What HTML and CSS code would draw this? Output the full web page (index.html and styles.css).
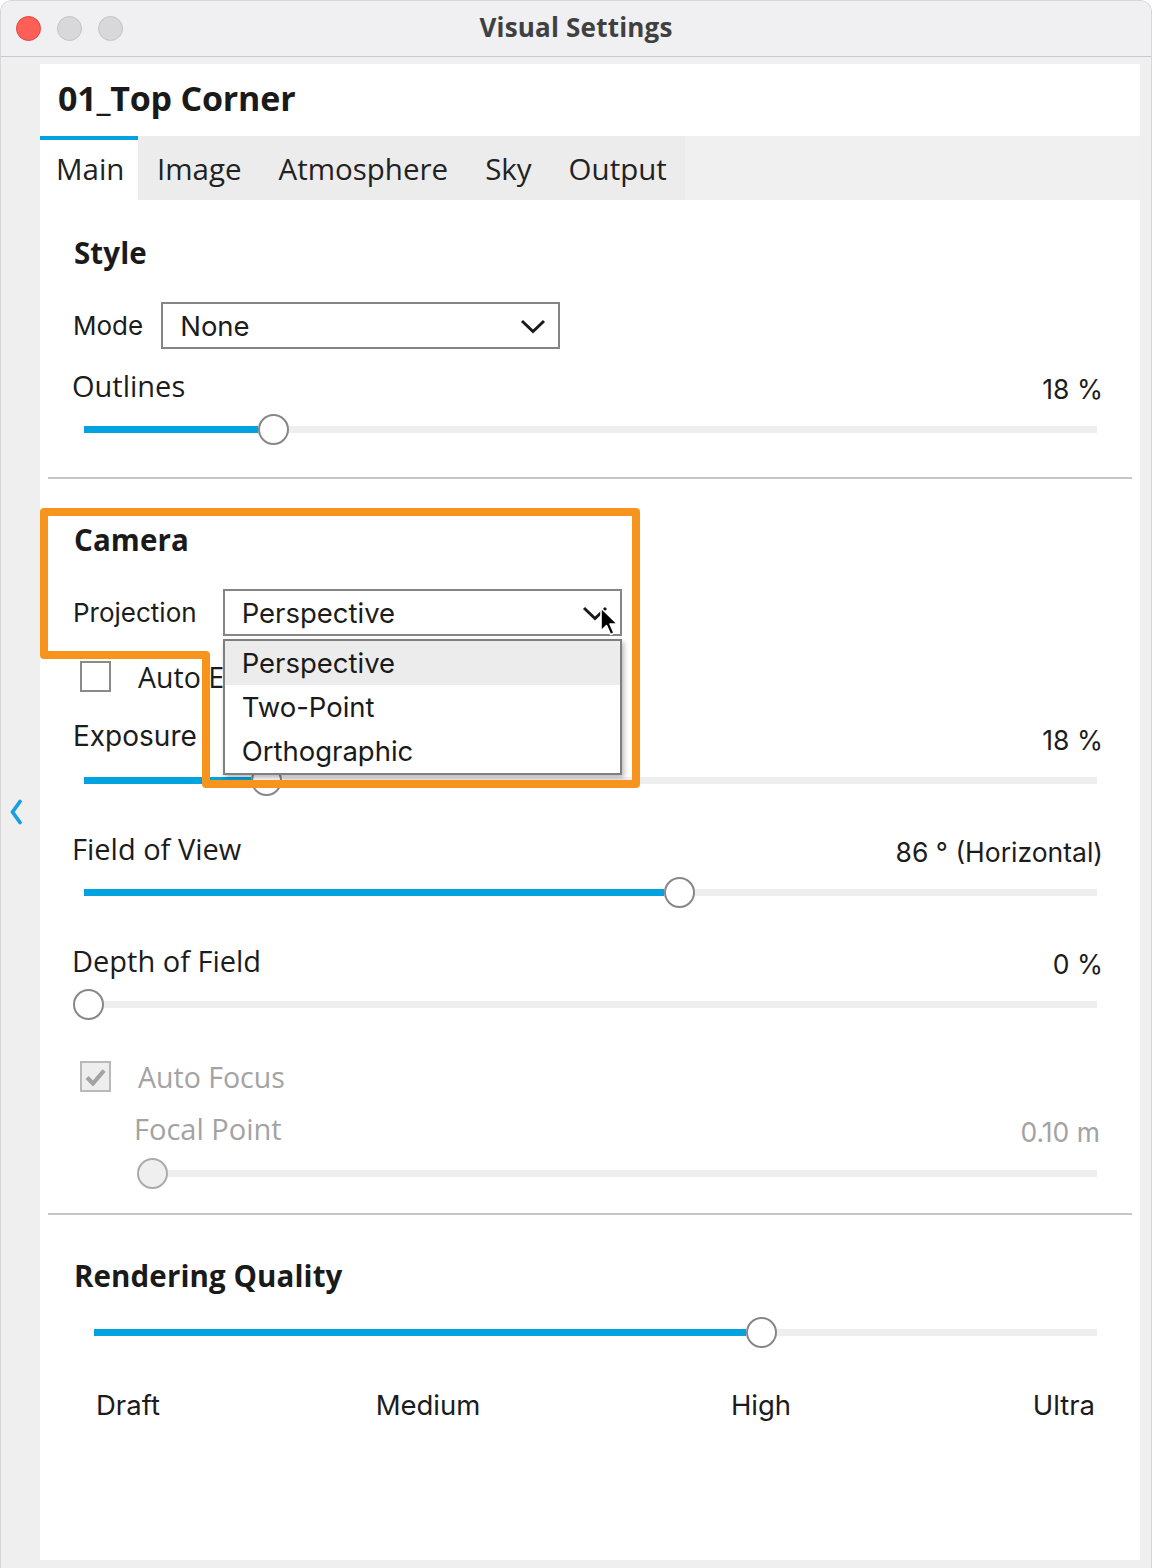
FILE: index.html
```html
<!DOCTYPE html>
<html>
<head>
<meta charset="utf-8">
<title>Visual Settings</title>
<link rel="stylesheet" href="styles.css">
</head>
<body>
<div class="window">
  <div class="titlebar">
    <div class="lights">
      <span class="light red"></span>
      <span class="light"></span>
      <span class="light"></span>
    </div>
    <div class="title">Visual Settings</div>
    <div></div>
  </div>
  <div class="body">
    <div class="gutter-left">
      <svg class="back" width="14" height="26" viewBox="0 0 14 26"><path d="M11 2.5 L3.5 13 L11 23.5" fill="none" stroke="#1a9fe0" stroke-width="3.8" stroke-linecap="round" stroke-linejoin="round"/></svg>
    </div>
    <div class="panel">
      <div class="doc-title">01_Top Corner</div>
      <div class="tabs">
        <div class="tab-group">
          <div class="tab active">Main</div>
          <div class="tab">Image</div>
          <div class="tab">Atmosphere</div>
          <div class="tab">Sky</div>
          <div class="tab">Output</div>
        </div>
      </div>
      <div class="content">
        <section class="section first">
          <h2 class="heading">Style</h2>
          <div class="field-row">
            <span class="field-label">Mode</span>
            <div class="select">
              <span>None</span>
              <svg class="chev" width="26" height="15" viewBox="0 0 26 15"><path d="M2 2 L13 12.5 L24 2" fill="none" stroke="#1a1a1a" stroke-width="3" stroke-linejoin="miter"/></svg>
            </div>
          </div>
          <div class="slider-block tight">
            <div class="slider-head"><span class="lbl">Outlines</span><span class="val">18 %</span></div>
            <div class="slider"><div class="track"><div class="fill" style="width:174px"></div><div class="thumb" style="left:174px"></div></div></div>
          </div>
        </section>
        <div class="divider"></div>
        <section class="section camera">
          <h2 class="heading">Camera</h2>
          <div class="field-row projection">
            <span class="field-label">Projection</span>
            <div class="select">
              <span>Perspective</span>
              <svg class="chev" width="26" height="15" viewBox="0 0 26 15"><path d="M2 2 L13 12.5 L24 2" fill="none" stroke="#1a1a1a" stroke-width="3" stroke-linejoin="miter"/></svg>
              <div class="dropdown">
                <div class="option hover">Perspective</div>
                <div class="option">Two-Point</div>
                <div class="option">Orthographic</div>
              </div>
            </div>
          </div>
          <div class="check-row">
            <span class="checkbox"></span>
            <span class="check-label">Auto Exposure</span>
          </div>
          <div class="slider-block after-check">
            <div class="slider-head"><span class="lbl inter">Exposure</span><span class="val">18 %</span></div>
            <div class="slider"><div class="track"><div class="fill" style="width:167px"></div><div class="thumb" style="left:167px"></div></div></div>
          </div>
          <div class="slider-block">
            <div class="slider-head"><span class="lbl">Field of View</span><span class="val">86 ° (Horizontal)</span></div>
            <div class="slider"><div class="track"><div class="fill" style="width:580px"></div><div class="thumb" style="left:580px"></div></div></div>
          </div>
          <div class="slider-block">
            <div class="slider-head"><span class="lbl">Depth of Field</span><span class="val">0 %</span></div>
            <div class="slider"><div class="track"><div class="fill" style="width:0px"></div><div class="thumb" style="left:-11px"></div></div></div>
          </div>
          <div class="check-row disabled">
            <span class="checkbox checked">
              <svg width="23" height="20" viewBox="0 0 23 20"><path d="M3 10.5 L9 16.5 L20 3.5" fill="none" stroke="#a3a3a3" stroke-width="4.2" stroke-linejoin="miter"/></svg>
            </span>
            <span class="check-label">Auto Focus</span>
          </div>
          <div class="slider-block sub disabled">
            <div class="slider-head"><span class="lbl">Focal Point</span><span class="val">0.10 m</span></div>
            <div class="slider"><div class="track"><div class="thumb" style="left:-3px"></div></div></div>
          </div>
        </section>
        <div class="divider"></div>
        <section class="section last">
          <h2 class="heading">Rendering Quality</h2>
          <div class="slider quality"><div class="track"><div class="fill" style="width:652px"></div><div class="thumb" style="left:652px"></div></div></div>
          <div class="quality-labels">
            <span class="q-left">Draft</span>
            <span class="q-center">Medium</span>
            <span class="q-center">High</span>
            <span class="q-right">Ultra</span>
          </div>
        </section>
      </div>
    </div>
    <div class="gutter-right"></div>
  </div>
  <svg class="overlay" width="1152" height="1568" viewBox="0 0 1152 1568">
    <path d="M44 512 H636 V784 H206 V655 H44 Z" fill="none" stroke="#f7941d" stroke-width="8" stroke-linejoin="round"/>
    <g transform="translate(601 608)">
      <path d="M0 0 L0 23 L5.5 17.5 L9.5 26.5 L13 25 L9 16 L16.5 16 Z" fill="#000" stroke="#fff" stroke-width="1.6" stroke-linejoin="round"/>
    </g>
  </svg>
</div>
</body>
</html>
```

FILE: styles.css
```css
* {
  box-sizing: border-box;
}

html, body {
  margin: 0;
  padding: 0;
  background: #ffffff;
}

body {
  width: 1152px;
  height: 1568px;
  overflow: hidden;
  font-family: "Inter", "Liberation Sans", sans-serif;
  color: #1c1c1c;
}

.window {
  position: relative;
  width: 1152px;
  height: 1568px;
  background: #efefef;
  border-radius: 12px 12px 0 0;
  overflow: hidden;
  border: 1px solid #d6d6d6;
  border-bottom: none;
}

/* Title bar */
.titlebar {
  height: 56px;
  display: grid;
  grid-template-columns: 1fr auto 1fr;
  align-items: center;
  background: #f0f0f2;
  border-bottom: 1px solid #c9c9c9;
}

.lights {
  display: flex;
  gap: 16px;
  padding-left: 15px;
}

.light {
  width: 25px;
  height: 25px;
  border-radius: 50%;
  background: #d8d8da;
  border: 1px solid #c4c4c6;
}

.light.red {
  background: #fe5f57;
  border-color: #e2463f;
}

.title {
  font-family: "Open Sans", "Liberation Sans", sans-serif;
  font-weight: 700;
  font-size: 26px;
  color: #404040;
  letter-spacing: 0.2px;
  padding-bottom: 4px;
}

/* Body */
.body {
  display: flex;
  height: 1511px;
}

.gutter-left {
  width: 39px;
  flex: none;
  padding-top: 742px;
  padding-left: 8px;
}

.gutter-right {
  width: 12px;
  flex: none;
}

.panel {
  width: 1100px;
  flex: none;
  margin-top: 7px;
  margin-bottom: 8px;
  background: #ffffff;
  display: flex;
  flex-direction: column;
}

.doc-title {
  height: 72px;
  display: flex;
  align-items: center;
  padding-left: 18px;
  padding-bottom: 4px;
  font-family: "Open Sans", "Liberation Sans", sans-serif;
  font-weight: 700;
  font-size: 34px;
  color: #1a1a1a;
  letter-spacing: -0.2px;
}

.tabs {
  height: 64px;
  background: #f0f0f0;
  display: flex;
}

.tab-group {
  display: flex;
  background: #ececec;
}

.tab {
  height: 64px;
  display: flex;
  align-items: center;
  padding: 0 18.5px;
  font-family: "Open Sans", "Liberation Sans", sans-serif;
  font-size: 29.5px;
  color: #222;
  border-top: 4px solid transparent;
  padding-bottom: 4px;
}

.tab.active {
  background: #ffffff;
  border-top-color: #00a3e0;
  padding-left: 16px;
  padding-right: 14px;
}

/* Content */
.content {
  flex: 1;
  display: flex;
  flex-direction: column;
}

.section {
  padding: 43px 37px 33px 34px;
}

.section.first {
  padding-top: 35px;
}

.section.camera {
  padding-bottom: 25px;
}

.section.last {
  padding-bottom: 0;
}

.heading {
  margin: 0;
  height: 36px;
  line-height: 36px;
  font-family: "Open Sans", "Liberation Sans", sans-serif;
  font-weight: 700;
  font-size: 29.5px;
  color: #1a1a1a;
  letter-spacing: 0.1px;
}

.field-row {
  margin-top: 31px;
  display: flex;
  align-items: center;
  gap: 18px;
}

.field-row.projection {
  gap: 26px;
}

.field-label {
  font-size: 26px;
  margin-left: -1px;
}

.select {
  position: relative;
  width: 399px;
  height: 47px;
  border: 2px solid #858585;
  display: flex;
  align-items: center;
  justify-content: space-between;
  padding: 0 12px 0 17px;
  font-size: 27.5px;
  background: #fff;
}

.chev {
  display: block;
  margin-top: 2px;
}

.dropdown {
  position: absolute;
  left: -2px;
  top: 48px;
  width: 399px;
  background: #fff;
  border: 2px solid #7f7f7f;
  box-shadow: 2px 3px 5px rgba(0, 0, 0, 0.28);
  z-index: 5;
}

.option {
  height: 44px;
  display: flex;
  align-items: center;
  padding-left: 17px;
  font-size: 27.5px;
  color: #1a1a1a;
}

.option.hover {
  background: #ececec;
}

/* checkbox rows */
.check-row {
  margin-top: 25px;
  display: flex;
  align-items: center;
  gap: 27px;
  padding-left: 6px;
  height: 31px;
}

.check-row.disabled {
  margin-top: 42px;
}

.checkbox {
  width: 31px;
  height: 31px;
  border: 2px solid #8a8a8a;
  background: #fff;
  display: flex;
  align-items: center;
  justify-content: center;
}

.checkbox.checked {
  background: #eeeeee;
  border-color: #b9b9b9;
}

.check-label {
  font-family: "Open Sans", "Liberation Sans", sans-serif;
  font-size: 28.5px;
  color: #1c1c1c;
}

.check-row.disabled .check-label {
  color: #a3a3a3;
}

/* Sliders */
.slider-block {
  margin-top: 33px;
}

.slider-block.after-check {
  margin-top: 24px;
}

.slider-block.tight {
  margin-top: 16px;
}

.slider-block.sub {
  margin-top: 16px;
  padding-left: 62px;
}

.slider-head {
  height: 40px;
  display: flex;
  align-items: center;
  justify-content: space-between;
}

.lbl {
  font-family: "Open Sans", "Liberation Sans", sans-serif;
  font-size: 29px;
  color: #1c1c1c;
  margin-left: -2px;
}

.lbl.inter {
  font-family: "Inter", "Liberation Sans", sans-serif;
  font-size: 28px;
  margin-left: -1px;
}

.val {
  font-size: 26.5px;
  padding-top: 8px;
  color: #1c1c1c;
}

.slider-block.disabled .lbl,
.slider-block.disabled .val {
  color: #a3a3a3;
}

.slider-block.disabled .val {
  margin-right: 3px;
}

.slider {
  height: 30px;
  margin-top: 9px;
  display: flex;
  align-items: center;
  padding: 0 6px 0 10px;
}

.slider-block.sub .slider {
  margin-top: 10px;
  padding-left: 4px;
}

.track {
  position: relative;
  flex: 1;
  height: 7px;
  background: #eeeeee;
}

.fill {
  height: 100%;
  background: #00a3e0;
}

.thumb {
  position: absolute;
  top: 50%;
  width: 31px;
  height: 31px;
  margin-top: -15.5px;
  border-radius: 50%;
  background: #fff;
  border: 2px solid #878787;
}

.slider-block.disabled .thumb {
  background: #efefef;
  border-color: #ababab;
}

.slider.quality {
  margin-top: 23px;
  padding-left: 20px;
}

.quality-labels {
  margin-top: 38px;
  height: 40px;
  display: grid;
  grid-template-columns: 167px 330px 336px 1fr;
  align-items: center;
  margin-left: 22px;
  margin-right: 8px;
  font-size: 27.5px;
  color: #1c1c1c;
}

.q-left { text-align: left; }
.q-center { text-align: center; }
.q-right { text-align: right; }

.divider {
  height: 2px;
  margin: 0 8px;
  background: #c6c6c6;
}

/* overlay annotation */
.overlay {
  position: absolute;
  left: -1px;
  top: -1px;
  pointer-events: none;
  z-index: 10;
}
```
